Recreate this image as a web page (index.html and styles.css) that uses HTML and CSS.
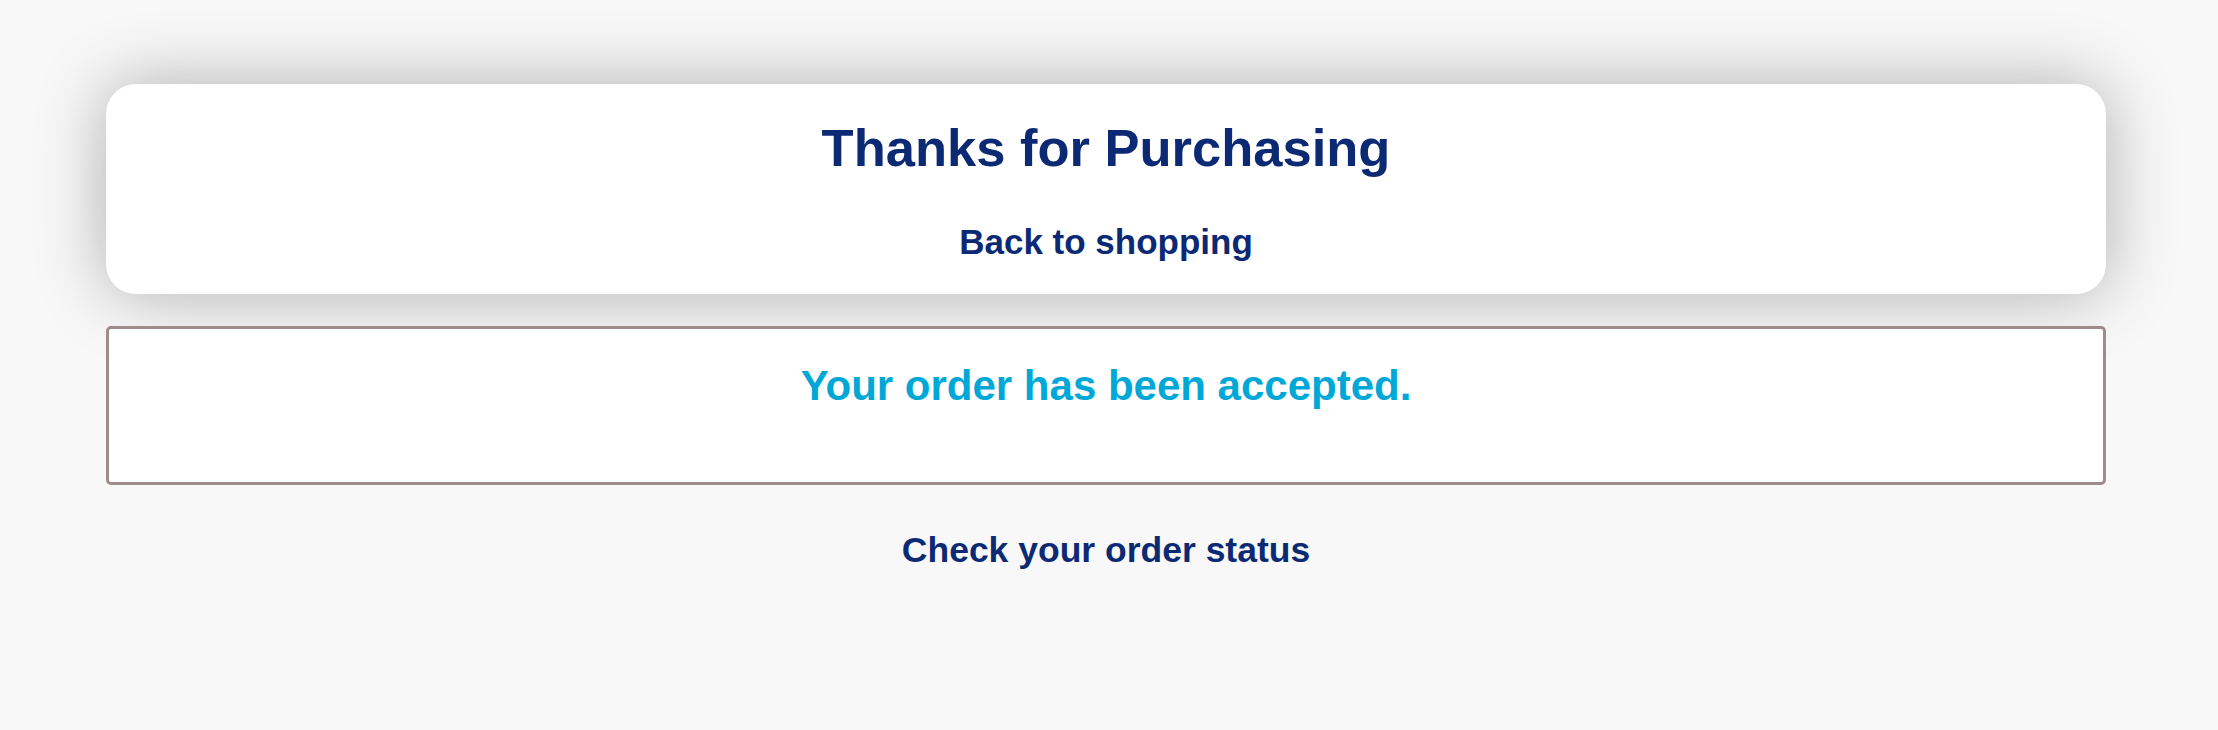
FILE: index.html
```html
<!DOCTYPE html>
<html lang="en">
<head>
<meta charset="utf-8">
<title>Thanks for Purchasing</title>
<link rel="stylesheet" href="styles.css">
</head>
<body>
<main class="page">
  <section class="card">
    <h1 class="card-title">Thanks for Purchasing</h1>
    <a class="card-link" href="#">Back to shopping</a>
  </section>
  <section class="notice">
    <p class="notice-text">Your order has been accepted.</p>
  </section>
  <a class="status-link" href="#">Check your order status</a>
</main>
</body>
</html>
```

FILE: styles.css
```css
html, body {
  margin: 0;
  padding: 0;
  background: #f8f8f8;
}

body {
  font-family: "Liberation Sans", Arial, sans-serif;
  font-weight: 700;
  color: #0c2a74;
  min-height: 730px;
}

.page {
  display: flex;
  flex-direction: column;
  align-items: stretch;
  width: 2000px;
  padding: 84px 0 0 106px;
}

.card {
  display: flex;
  flex-direction: column;
  align-items: center;
  background: #ffffff;
  border-radius: 30px;
  padding: 34px 0 32px;
  box-shadow: 0 0 70px rgba(0, 0, 0, 0.3);
}

.card-title {
  margin: 0;
  font-size: 52.5px;
  line-height: 60px;
  font-weight: 700;
  color: #0c2a74;
}

.card-link {
  margin-top: 44px;
  font-size: 35px;
  line-height: 40px;
  color: #0c2a74;
  text-decoration: none;
}

.notice {
  margin-top: 32px;
  background: #ffffff;
  border: 3px solid #9e8c8c;
  border-radius: 5px;
  padding: 33px 0 72px;
  text-align: center;
}

.notice-text {
  margin: 0;
  font-size: 42px;
  line-height: 48px;
  color: #00a8d8;
}

.status-link {
  align-self: center;
  margin-top: 45px;
  font-size: 35.5px;
  line-height: 40px;
  color: #0c2a74;
  text-decoration: none;
}
```
